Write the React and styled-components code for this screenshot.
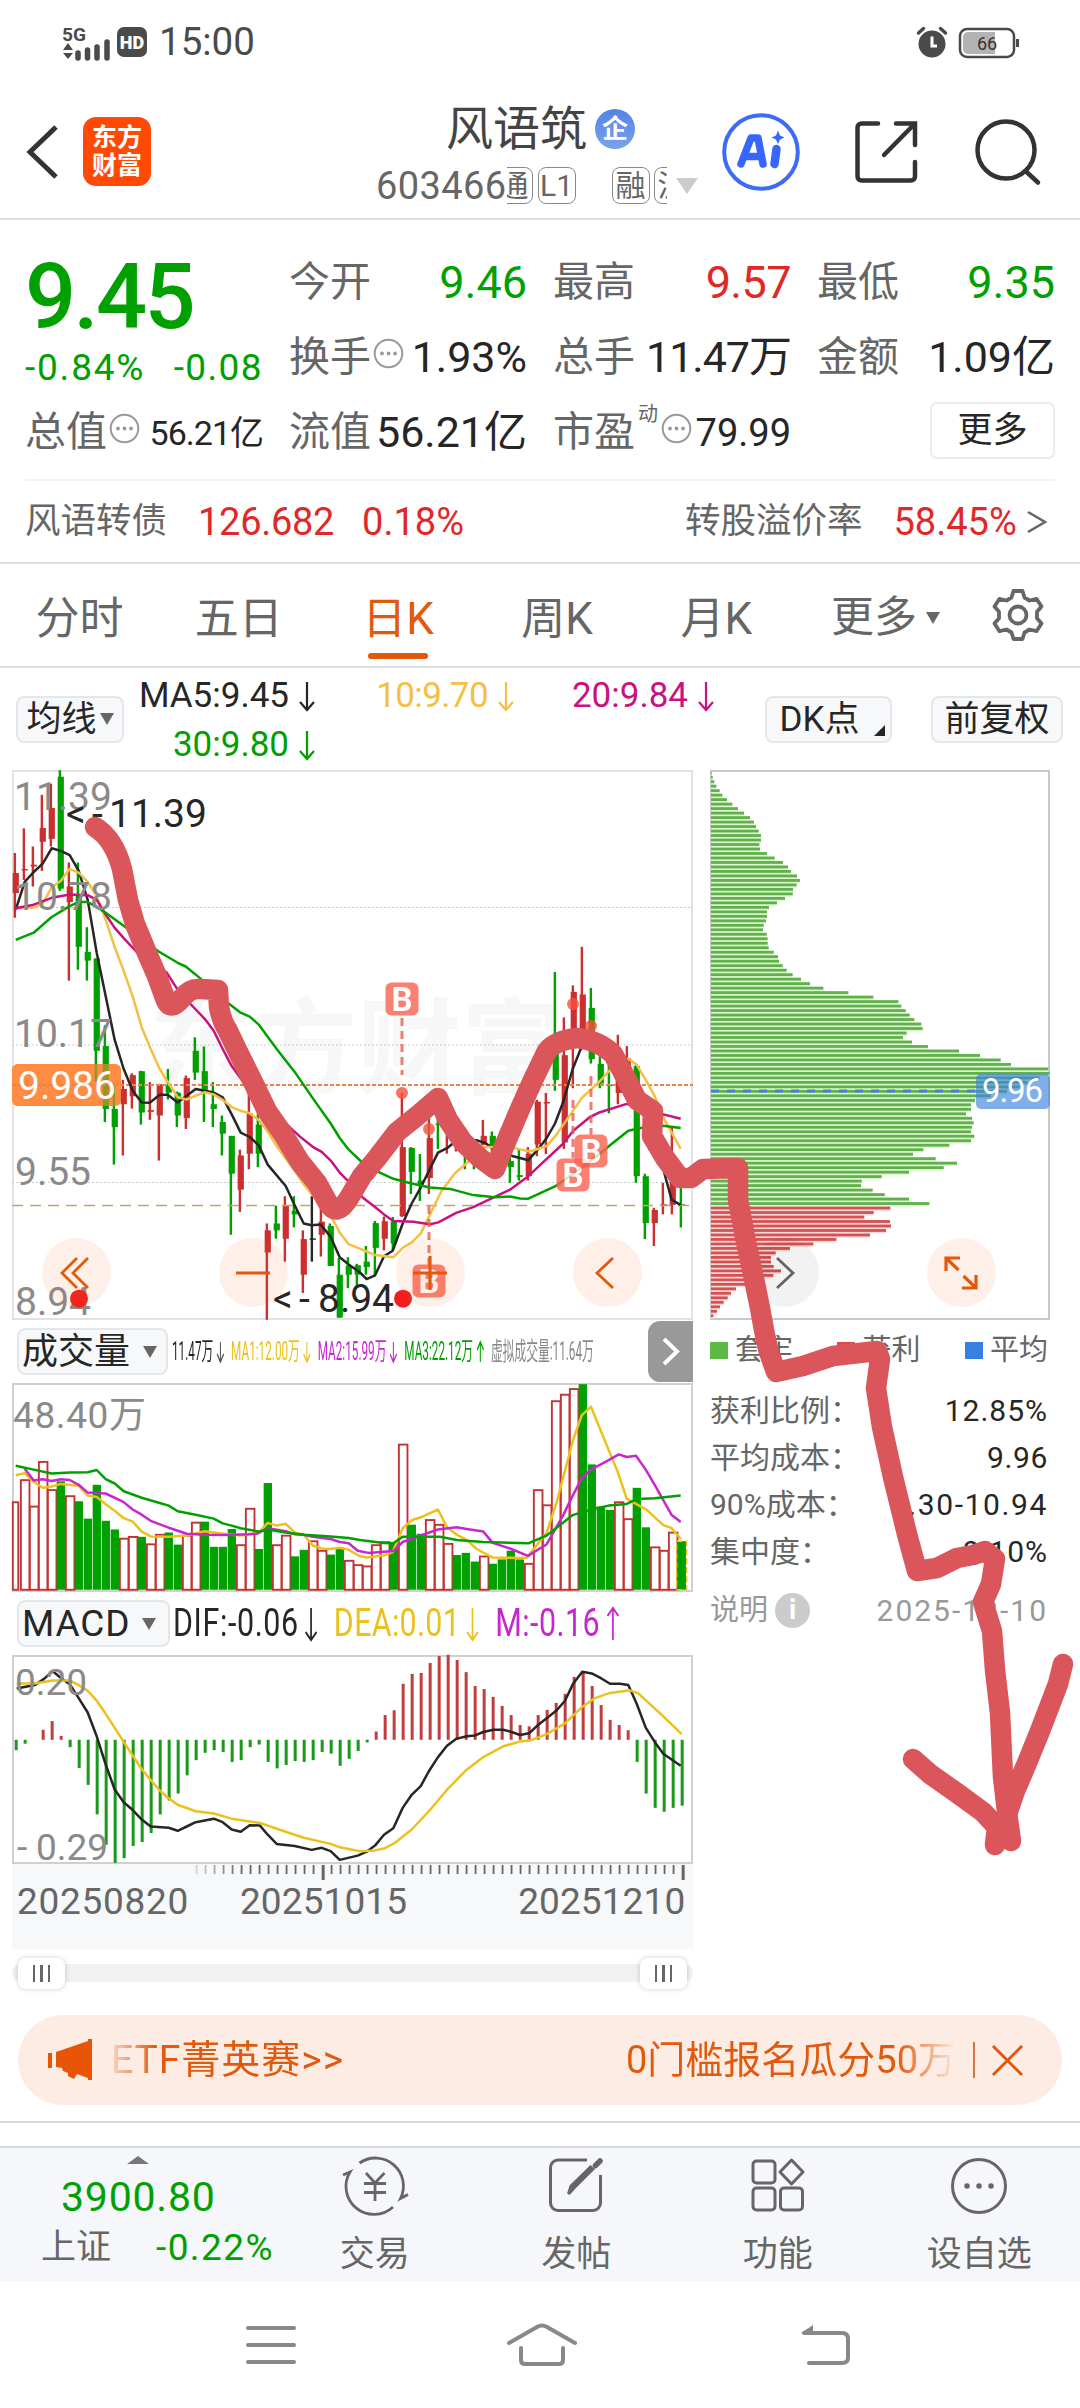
import styled, { createGlobalStyle } from "styled-components"

const GlobalStyle = createGlobalStyle`
  * {
    box-sizing: border-box;
  }

  body {
    margin: 0;
    background-color: #fff;
    font-family: Roboto, "Noto Sans CJK SC", sans-serif;
    line-height: 1;
  }

  svg {
    display: block;
    flex-shrink: 0;
    overflow: visible;
  }
`

const RED = "#cc2f2f"
const GREEN = "#00a000"
const ORANGE = "#e1590c"
const YELLOW = "#ecc11c"
const AMBER = "#f4bf45"
const MAGENTA = "#c8127f"
const PURPLE = "#c827d0"
const INK = "#262626"

const Screen = styled.div`
  position: relative;
  width: 1080px;
  height: 2408px;
  overflow: hidden;
  background-color: #fff;
`

const Row = styled.div`
  display: flex;
  align-items: center;
  white-space: nowrap;
`

const Text = styled.span`
  font-size: ${p => p.$size || 38}px;
  color: ${p => p.$color || "#666"};
  font-weight: ${p => p.$weight || 400};
  letter-spacing: ${p => p.$spacing || 0}px;
  margin-left: ${p => p.$left || 0}px;
  white-space: nowrap;
`

/* status bar */

const StatusBar = styled(Row)`
  height: 85px;
  padding: 0 60px 0 62px;
  justify-content: space-between;
`

const Clock = styled.span`
  margin-left: 12px;
  font-size: 38.5px;
  color: #4a4a4a;
`

/* header */

const Header = styled(Row)`
  height: 135px;
  padding-left: 27px;
  border-bottom: 2px solid #dcdcdc;
`

const Logo = styled.div`
  display: grid;
  align-content: center;
  justify-content: center;
  width: 68px;
  height: 69px;
  margin-left: 25px;
  border-radius: 13px;
  background-color: #ff4a05;
  color: #fff;
  font-size: 25px;
  font-weight: 700;
  line-height: 28px;
`

const TitleBlock = styled.div`
  width: 346px;
  margin-left: 225px;
  padding-top: 11px;
`

const TitleRow = styled(Row)`
  height: 57px;
  padding-left: 70px;
  gap: 8px;
`

const Badge = styled.span`
  display: flex;
  align-items: center;
  justify-content: center;
  width: 40px;
  height: 40px;
  border-radius: 50%;
  background: linear-gradient(#5382e6, #7aa3ec);
  color: #fff;
  font-size: 26px;
  font-weight: 700;
`

const CodeRow = styled(Row)`
  height: 57px;
`

const TagClip = styled(Row)`
  justify-content: ${p => p.$end ? "flex-end" : "flex-start"};
  width: ${p => p.$width}px;
  overflow: hidden;
`

const Tag = styled.span`
  display: flex;
  flex-shrink: 0;
  align-items: center;
  justify-content: center;
  width: 38px;
  height: 37px;
  margin-left: ${p => p.$left || 0}px;
  border: 1.5px solid #8a8a8a;
  border-radius: 8px;
  color: #666;
  font-size: 30px;
`

const Tool = styled.div`
  margin-left: ${p => p.$left || 0}px;
`

const Triangle = styled.i`
  width: 0;
  height: 0;
  margin-left: ${p => p.$left || 0}px;
  border: ${p => p.$half || 7.5}px solid transparent;
  border-bottom: 0;
  border-top: ${p => p.$height || 12}px solid ${p => p.$color || "#666"};
`

/* quote */

const Quote = styled.section`
  height: 344px;
  padding: 25px 25px 0;
  border-bottom: 2px solid #dcdcdc;
`

const QuoteGrid = styled.div`
  display: grid;
  grid-template-columns: repeat(4, 238px);
  grid-auto-rows: 75px;
  column-gap: 26px;
`

const PriceCell = styled.div`
  grid-row: span 2;
`

const Price = styled.div`
  height: 104px;
  line-height: 105px;
  font-size: 90px;
  font-weight: 500;
  letter-spacing: -2.6px;
  color: ${GREEN};
`

const Cell = styled(Row)`
  justify-content: space-between;
`

const Hint = styled.span`
  margin: 0 0 8px 2px;
`

const Sup = styled.sup`
  margin: 0 1px 38px 3px;
  font-size: 20px;
  line-height: 20px;
  color: #666;
`

const MoreButton = styled.button`
  justify-self: end;
  align-self: center;
  width: 125px;
  height: 57px;
  margin-top: -5px;
  padding: 0;
  border: 2px solid #ebebeb;
  border-radius: 7px;
  background-color: #fff;
  color: ${INK};
  font: 400 35px/1 Roboto, "Noto Sans CJK SC", sans-serif;
`

const BondRow = styled(Row)`
  height: 83px;
  margin-top: 9px;
  border-top: 2px solid #f3f3f3;
`

/* period tabs */

const Tabs = styled(Row)`
  height: 104px;
  padding-right: 36px;
  border-bottom: 2px solid #dcdcdc;
`

const Tab = styled.div`
  display: flex;
  flex-direction: column;
  align-items: center;
  width: 159.2px;
  height: 100%;
  padding-top: 33px;
  font-size: 44px;
  color: ${p => p.$active ? ORANGE : "#666"};

  &::after {
    content: "";
    width: 60px;
    height: 6px;
    margin-top: 12px;
    border-radius: 3px;
    background-color: ${p => p.$active ? ORANGE : "transparent"};
  }
`

const MoreTab = styled(Row)`
  flex: 1;
  padding: 5px 0 0 35px;
`

/* moving averages */

const AverageBar = styled(Row)`
  height: 102px;
  padding: 0 16px;
`

const Averages = styled.div`
  display: grid;
  grid-template-columns: 175px 199px 200px;
  grid-auto-rows: 49px;
  justify-items: end;
  align-items: center;
  margin-left: 16px;
  padding-top: 2px;
`

const Chip = styled.div`
  display: flex;
  align-items: center;
  justify-content: ${p => p.$start ? "flex-start" : "center"};
  position: relative;
  width: ${p => p.$width}px;
  height: 47px;
  margin-left: ${p => p.$left || 0}px;
  padding-left: ${p => p.$start || 0}px;
  padding-right: ${p => p.$end || 0}px;
  border: 2px solid #e3e7eb;
  border-radius: 8px;
  background-color: #f7f8fa;
  color: ${INK};
  font-size: ${p => p.$size || 35}px;
  white-space: nowrap;
`

const Corner = styled.i`
  position: absolute;
  right: 5px;
  bottom: 5px;
  border-left: 11px solid transparent;
  border-bottom: 11px solid ${INK};
`

/* charts */

const Charts = styled.section`
  display: grid;
  grid-template-columns: 681px 340px;
  column-gap: 17px;
  padding-left: 12px;
`

const ChartBox = styled.div`
  position: relative;
  height: ${p => p.$height}px;
  box-shadow: inset 0 0 0 2px ${p => p.$line || "#d0d0d0"};
`

const RoundButton = styled.button`
  position: absolute;
  left: ${p => p.$x - 34.5}px;
  top: 468px;
  display: flex;
  align-items: center;
  justify-content: center;
  width: 69px;
  height: 69px;
  padding: 0;
  border: none;
  border-radius: 50%;
  background-color: ${p => p.$gray ? "rgb(0 0 0 / .05)" : "rgb(246 105 30 / .1)"};
`

const ChartHeader = styled(Row)`
  position: relative;
  height: 63px;
  padding-left: 5px;
`

const Squeezed = styled(Row)`
  width: 0;
  margin-left: ${p => p.$left}px;
  transform: scaleX(${p => p.$scale});
  transform-origin: left;
  gap: ${p => p.$gap}px;
`

const NextButton = styled.button`
  position: absolute;
  right: 0;
  top: 1px;
  display: flex;
  align-items: center;
  justify-content: center;
  width: 45px;
  height: 61px;
  padding: 0;
  border: none;
  border-radius: 12px 0 0 12px;
  background-color: #999;
`

const Axis = styled.div`
  height: 85px;
  background-color: #f7f8fa;
`

const AxisDates = styled(Row)`
  padding: 3px 0 0 5px;
`

const Slider = styled(Row)`
  height: 48px;
`

const Track = styled(Row)`
  justify-content: space-between;
  width: 681px;
  height: 18px;
  padding: 0 6px;
  border-radius: 9px;
  background-color: #f1f1f3;
`

const Handle = styled.div`
  display: flex;
  align-items: center;
  justify-content: center;
  gap: 5px;
  width: 47px;
  height: 31px;
  border-radius: 8px;
  background-color: #fff;
  box-shadow: 0 0 5px rgb(0 0 0 / .2);

  i {
    width: 2.5px;
    height: 17px;
    background-color: #666;
  }
`

const Legend = styled(Row)`
  justify-content: space-between;
  height: 60px;
  padding-right: 2px;
`

const LegendItem = styled(Row)`
  gap: 7px;
  font-size: 29px;
  color: #666;

  &::before {
    content: "";
    width: 18px;
    height: 17px;
    background-color: ${p => p.$color};
  }
`

const Stats = styled.div`
  padding-top: 7px;
`

const Stat = styled(Row)`
  justify-content: space-between;
  height: ${p => p.$tall ? 71 : 47}px;
  padding-right: 2px;
  font-size: ${p => p.$tall ? 29 : 30}px;
  color: ${p => p.$tall ? "#999" : "#666"};
`

const StatValue = styled.span`
  font-size: 30px;
  color: ${p => p.$muted ? "#999" : INK};
  letter-spacing: ${p => p.$spacing || 1}px;
`

const Info = styled.span`
  display: inline-flex;
  align-items: center;
  justify-content: center;
  width: 35px;
  height: 35px;
  margin-left: 7px;
  border-radius: 50%;
  background-color: #ccc;
  color: #fff;
  font-size: 27px;
  font-weight: 700;
`

/* banner */

const Banner = styled(Row)`
  height: 90px;
  margin: 18px 18px 16px;
  padding: 0 38px 0 30px;
  border-radius: 45px;
  background-color: #fcece3;
`

const Marquee = styled(Row)`
  flex: 1;
  justify-content: space-between;
  margin: 0 17px;
  overflow: hidden;
  height: 60px;
  mask-image: linear-gradient(90deg, rgb(0 0 0 / .15), #000 45px, #000 calc(100% - 60px), transparent);
`

const Separator = styled.i`
  width: 2px;
  height: 36px;
  margin-right: 16px;
  background-color: #d9763c;
`

/* bottom bars */

const Gap = styled.div`
  height: 25px;
  border-top: 2px solid #d6dadd;
`

const ActionBar = styled.nav`
  display: grid;
  grid-template-columns: 274px repeat(4, 201.5px);
  height: 136px;
  border-top: 2px solid #d6dadd;
  background-color: #f6f7fa;
`

const IndexBlock = styled.div`
  padding-top: 8px;
`

const IndexRow = styled(Row)`
  height: ${p => p.$height}px;
`

const UpTriangle = styled.i`
  display: block;
  width: 0;
  margin-left: 127px;
  border: 11px solid transparent;
  border-top: 0;
  border-bottom: 8px solid #777;
`

const Action = styled.div`
  display: flex;
  flex-direction: column;
  align-items: center;
  padding-top: 8px;
  gap: 21px;
  color: #666;
  font-size: 35px;
`

const SystemNav = styled.nav`
  display: grid;
  grid-template-columns: 261px 292px 52px;
  align-items: center;
  height: 126px;
  padding-left: 246px;
`

const Sketch = styled.svg`
  position: absolute;
  left: 0;
  top: 0;
  pointer-events: none;
`

/* ---------- data ---------- */

const STEP = 27
const FIRST = 47

// [up, high, low, bodyTop, bodyBottom]
const candles = [
  [1, 256, 434, 311, 366], [1, 188, 330, 300, 304], [1, 238, 348, 288, 293], [1, 96, 305, 187, 225],
  [1, 65, 238, 132, 217], [0, 28, 360, 46, 354], [1, 282, 607, 348, 391], [0, 282, 577, 370, 514],
  [0, 460, 607, 528, 552], [0, 546, 885, 546, 800], [0, 730, 996, 787, 960], [0, 890, 1113, 960, 1010],
  [1, 880, 1088, 905, 947], [1, 862, 959, 867, 925], [0, 855, 1003, 856, 970], [1, 886, 990, 963, 968],
  [1, 892, 1102, 892, 978], [0, 850, 934, 895, 915], [0, 912, 1010, 915, 978], [1, 868, 1015, 875, 985],
  [0, 763, 880, 800, 860], [0, 788, 996, 856, 915], [0, 886, 1010, 947, 960], [0, 978, 1088, 996, 1028],
  [0, 1034, 1306, 1034, 1138], [1, 1072, 1243, 1088, 1182], [1, 895, 1126, 972, 1083], [0, 972, 1120, 1003, 1083],
  [1, 1275, 1540, 1294, 1355], [0, 1226, 1317, 1275, 1294], [1, 1200, 1380, 1226, 1317], [0, 1200, 1286, 1240, 1250],
  [1, 1294, 1466, 1318, 1416], [2, 1200, 1380, 1316, 1320], [1, 1230, 1366, 1270, 1306], [0, 1275, 1392, 1282, 1392],
  [0, 1370, 1534, 1416, 1534], [0, 1368, 1453, 1392, 1416], [0, 1386, 1450, 1390, 1416], [0, 1337, 1416, 1380, 1395],
  [0, 1268, 1416, 1274, 1342], [1, 1256, 1349, 1269, 1317], [0, 1257, 1350, 1270, 1330], [1, 916, 1257, 1065, 1255],
  [0, 1065, 1194, 1067, 1133], [0, 1084, 1213, 1157, 1168], [1, 985, 1194, 1040, 1150], [0, 975, 1070, 1000, 1004],
  [1, 1000, 1083, 1020, 1024], [1, 1000, 1077, 1020, 1024], [0, 1070, 1126, 1080, 1084], [0, 1080, 1126, 1090, 1094],
  [1, 990, 1060, 1034, 1058], [0, 1022, 1090, 1034, 1062], [1, 1080, 1120, 1090, 1110], [0, 1080, 1163, 1103, 1120],
  [0, 1070, 1157, 1142, 1147], [1, 1065, 1157, 1083, 1145], [1, 935, 1090, 940, 1058], [1, 916, 1084, 941, 945],
  [0, 583, 910, 790, 880], [1, 708, 1070, 812, 1052], [1, 620, 903, 638, 780], [1, 514, 745, 645, 745],
  [0, 627, 835, 682, 823], [0, 815, 903, 836, 890], [0, 840, 972, 893, 897], [1, 756, 947, 850, 916],
  [1, 787, 850, 820, 850], [0, 840, 1163, 842, 1145], [0, 1138, 1318, 1145, 1274], [1, 1232, 1337, 1238, 1274],
  [1, 1163, 1250, 1222, 1227], [1, 1010, 1250, 1140, 1224], [0, 1175, 1286, 1222, 1225],
]

const priceLines = [
  [INK, "47,412 74,335 101,308 128,285 155,243 182,250 209,262 236,305 263,385 290,530 317,650 344,770 371,850 398,910 425,942 449,943 479,921 503,921 533,942 587,905 641,915 668,928 695,975 722,1025 749,1037 776,1060 803,1113 857,1172 884,1225 911,1275 935,1280 962,1278 992,1312 1019,1368 1046,1388 1080,1410 1100,1428 1125,1418 1152,1365 1178,1350 1208,1275 1235,1220 1260,1180 1287,1130 1314,1080 1341,1068 1365,1050 1395,1045 1430,1046 1456,1054 1490,1075 1540,1090 1585,1101 1615,1070 1640,1040 1665,1000 1690,940 1718,850 1742,795 1770,770 1800,765 1850,800 1900,880 1950,1000 1985,1110 2015,1210 2042,1224"],
  [AMBER, "47,408 101,406 128,395 155,350 182,333 209,300 236,310 263,335 290,375 317,440 344,515 371,580 398,650 425,735 452,795 479,850 506,890 533,928 560,934 614,914 641,920 668,935 695,955 722,965 749,972 776,990 803,1022 830,1062 884,1130 911,1167 938,1198 962,1210 1005,1275 1019,1300 1046,1332 1100,1352 1125,1362 1180,1368 1208,1342 1235,1327 1262,1303 1290,1250 1325,1185 1365,1137 1405,1105 1450,1065 1530,1065 1590,1077 1640,1062 1670,1030 1715,970 1745,930 1800,883 1828,855 1860,830 1885,822 1910,838 1937,880 1964,925 1991,985 2018,1030 2042,1070"],
  [MAGENTA, "47,408 101,398 155,379 209,370 263,372 290,385 317,425 344,462 371,490 417,535 500,585 528,625 570,670 614,712 641,745 668,795 695,842 749,910 900,1036 938,1064 965,1078 992,1102 1019,1135 1046,1160 1090,1205 1125,1230 1152,1250 1180,1268 1240,1270 1290,1277 1315,1272 1370,1245 1420,1230 1500,1195 1530,1182 1585,1145 1640,1097 1690,1055 1720,1020 1770,982 1800,969 1880,946 1930,955 1990,975 2042,987"],
  [GREEN, "47,495 101,475 155,432 209,402 236,391 263,391 290,404 317,420 380,462 475,526 533,558 557,568 600,600 690,673 720,694 749,706 776,728 830,795 884,858 938,930 992,1000 1019,1040 1046,1072 1090,1110 1135,1133 1180,1152 1235,1165 1290,1176 1350,1180 1420,1197 1485,1203 1530,1201 1560,1206 1585,1207 1665,1173 1740,1125 1790,1090 1830,1060 1885,1020 1930,1011 1990,1006 2042,1012"],
]

// [up, top]
const volumes = [
  [1, 418], [1, 367], [1, 428], [1, 325], [1, 390], [0, 372], [1, 404], [0, 418], [0, 458], [0, 380],
  [0, 463], [0, 483], [1, 502], [1, 498], [0, 500], [1, 515], [1, 493], [0, 490], [0, 518], [1, 495],
  [1, 465], [0, 465], [0, 523], [0, 523], [0, 482], [1, 517], [1, 433], [0, 528], [0, 376], [1, 517],
  [1, 495], [0, 545], [0, 530], [1, 508], [1, 530], [0, 541], [0, 524], [1, 553], [1, 563], [1, 566],
  [1, 517], [1, 510], [0, 515], [1, 285], [0, 472], [0, 493], [1, 459], [1, 470], [1, 514], [0, 542],
  [0, 537], [0, 557], [1, 543], [0, 562], [0, 552], [0, 532], [0, 552], [1, 560], [1, 390], [1, 425],
  [1, 185], [1, 170], [1, 157], [0, 148], [0, 333], [0, 430], [0, 438], [1, 418], [1, 457], [0, 387],
  [0, 478], [1, 522], [1, 530], [1, 488], [0, 510],
]

const volumeLines = [
  [YELLOW, "47,358 74,353 101,373 128,387 155,384 182,378 236,382 263,405 290,408 317,425 344,440 371,457 398,465 425,488 452,499 506,500 560,497 614,487 668,493 722,497 776,490 803,468 830,474 857,470 884,490 911,495 938,520 965,527 992,528 1019,525 1046,530 1080,545 1100,548 1150,543 1178,535 1208,480 1235,462 1262,455 1314,437 1341,478 1370,495 1400,507 1430,528 1478,548 1580,549 1640,490 1670,420 1720,275 1745,220 1773,200 1826,300 1853,350 1880,412 1940,438 1990,473 2015,480 2042,505"],
  [PURPLE, "74,343 101,370 128,367 155,371 182,367 209,369 236,380 263,398 317,400 371,420 398,437 425,449 452,463 506,479 533,486 560,493 614,495 668,496 749,494 770,493 803,480 857,487 884,494 911,495 938,500 992,505 1019,512 1046,515 1073,532 1105,537 1180,533 1208,512 1262,497 1314,483 1370,478 1400,482 1450,488 1478,514 1530,527 1584,544 1640,517 1690,450 1718,405 1745,365 1773,345 1826,323 1856,310 1880,316 1908,313 1937,345 1964,380 2015,450 2042,466"],
  [GREEN, "47,336 101,345 155,354 209,352 263,351 290,346 317,367 344,377 371,395 425,410 479,422 506,428 533,441 587,449 641,458 668,469 695,474 722,480 776,488 803,483 857,490 911,495 992,499 1046,503 1080,507 1150,514 1180,515 1208,500 1262,500 1320,500 1370,507 1450,512 1585,515 1640,497 1690,467 1718,450 1773,437 1826,428 1880,424 1910,413 1964,411 2042,405"],
]

const MACD_ZERO = 968
const macdBars = [
  992, 977, 968, 945, 925, 959, 985, 1033, 1072, 1140, 1210, 1252, 1241, 1213, 1204, 1183, 1140, 1108, 1092,
  1050, 1015, 998, 992, 996, 1019, 1015, 985, 979, 1019, 1034, 1026, 1017, 1019, 1015, 996, 1000, 1028, 1012,
  994, 974, 949, 911, 900, 839, 816, 814, 791, 775, 772, 784, 812, 844, 851, 869, 890, 911, 934, 937, 911, 899,
  883, 862, 823, 810, 844, 888, 922, 934, 946, 1019, 1092, 1125, 1134, 1125, 1120,
]

const macdLines = [
  [INK, "50,850 104,842 131,828 158,810 182,825 209,840 236,872 263,905 290,960 317,1025 344,1083 371,1112 398,1130 425,1152 452,1168 506,1171 533,1178 560,1168 587,1158 641,1150 668,1158 695,1175 722,1180 749,1165 780,1166 803,1187 830,1208 884,1213 935,1222 965,1217 992,1225 1019,1245 1073,1235 1100,1226 1125,1212 1152,1187 1180,1172 1208,1125 1235,1095 1262,1075 1287,1040 1314,1008 1341,982 1368,966 1400,960 1425,958 1450,950 1480,945 1510,945 1535,950 1560,957 1587,953 1614,934 1641,918 1670,900 1695,878 1720,838 1747,811 1775,815 1803,826 1830,839 1860,839 1885,842 1910,885 1937,940 1964,973 1990,1000 2018,1015 2042,1028"],
  [YELLOW, "50,838 104,838 158,831 209,831 236,842 263,855 290,878 317,908 371,973 425,1036 479,1085 506,1103 533,1118 587,1133 641,1138 700,1151 780,1160 857,1180 911,1194 992,1208 1019,1216 1080,1225 1125,1223 1155,1218 1184,1206 1235,1175 1290,1130 1345,1080 1400,1037 1450,1008 1510,983 1560,972 1590,970 1640,955 1695,930 1747,892 1785,872 1830,860 1890,854 1915,861 1990,914 2045,955"],
]

const trapped = [
  2, 5, 10, 16, 26, 34, 48, 64, 81, 99, 117, 129, 135, 143, 150, 150, 145, 147, 168, 191, 216, 231, 240, 258,
  267, 257, 246, 245, 222, 198, 174, 168, 168, 165, 158, 156, 167, 170, 170, 173, 188, 201, 204, 215, 227, 245,
  270, 297, 337, 412, 487, 562, 571, 584, 596, 610, 631, 635, 587, 576, 603, 651, 744, 807, 869, 900, 1012,
  1016, 985, 950, 930, 888, 840, 792, 780, 780, 765, 783, 788, 783, 780, 790, 780, 715, 637, 606, 674, 738,
  698, 594, 512, 452, 450, 485, 521, 594, 655,
]
const profitable = [
  538, 488, 460, 537, 540, 525, 477, 376, 307, 237, 194, 180, 180, 188, 210, 187, 120, 103, 75, 60, 50, 38,
  27, 18, 7,
]

const barX = i => (FIRST + i * STEP) / 3 - 12
const priceY = v => v / 2.751 - 10
const panelY = v => v / 2.306 - 63
const macdY = v => v / 2.306 - 335

const scaleLine = (points, toY) =>
  points.split(" ").map(pair => {
    const [x, y] = pair.split(",").map(Number)
    return `${(x / 3 - 12).toFixed(1)},${toY(y).toFixed(1)}`
  }).join(" ")

function Lines({ items, toY }) {
  return items.map(([color, points]) => (
    <polyline key={color} points={scaleLine(points, toY)} fill="none" stroke={color} strokeWidth="2.5" strokeLinejoin="round" />
  ))
}

/* ---------- icons ---------- */

function Dots() {
  return (
    <Hint>
      <svg width="31" height="31" viewBox="0 0 31 31">
        <circle cx="15.5" cy="15.5" r="13.8" fill="none" stroke="#999" strokeWidth="2" />
        <circle cx="9" cy="15.5" r="1.9" fill="#999" />
        <circle cx="15.5" cy="15.5" r="1.9" fill="#999" />
        <circle cx="22" cy="15.5" r="1.9" fill="#999" />
      </svg>
    </Hint>
  )
}

function Arrow({ up, color, height = 30, width = 16, margin = 10 }) {
  return (
    <svg width={width + margin} height={height} viewBox={`${-margin} 0 ${width + margin} ${height}`}>
      <path
        d={`M${width / 2} 1V${height - 1}M1 ${height - width / 2 - 1}L${width / 2} ${height - 1}L${width - 1} ${height - width / 2 - 1}`}
        transform={up ? `rotate(180 ${width / 2} ${height / 2})` : undefined}
        fill="none"
        stroke={color}
        strokeWidth="2.2"
      />
    </svg>
  )
}

function SignalIcon() {
  return (
    <svg width="85" height="36" viewBox="0 0 85 36">
      <text x="0" y="15.5" fontSize="19" fontWeight="700" fill="#4a4a4a" textLength="24" lengthAdjust="spacingAndGlyphs">5G</text>
      <path d="M6 18l5 7H1zM6 34l5-6H1z" fill="#4a4a4a" />
      <path d="M16 33v-5M25.500 33v-8M35 33V22M45 33V17" stroke="#4a4a4a" strokeWidth="5.500" strokeLinecap="round" />
      <rect x="55" y="2" width="30" height="30" rx="7" fill="#4a4a4a" />
      <text x="70" y="23.500" fontSize="18" fontWeight="900" textAnchor="middle" fill="#fff">HD</text>
    </svg>
  )
}

function BatteryIcon() {
  return (
    <svg width="103" height="34" viewBox="0 0 103 34">
      <circle cx="15" cy="18" r="13.5" fill="#4a4a4a" />
      <path d="M1.5 7L6.5 2.5M28.5 7L23.5 2.5" stroke="#4a4a4a" strokeWidth="3.5" strokeLinecap="round" />
      <path d="M15 10.5V20H20" fill="none" stroke="#fff" strokeWidth="3" />
      <rect x="43" y="3" width="54" height="28" rx="7" fill="#fff" stroke="#4a4a4a" strokeWidth="2.5" />
      <path d="M51 6H78V28H51a5 5 0 0 1-5-5V11a5 5 0 0 1 5-5z" fill="#b3b3b3" />
      <path d="M100.5 13v8" stroke="#4a4a4a" strokeWidth="3" />
      <text x="70" y="23.5" fontSize="18" textAnchor="middle" fill="#333">66</text>
    </svg>
  )
}

function AiIcon() {
  return (
    <svg width="78" height="78" viewBox="0 0 78 78">
      <circle cx="39" cy="39" r="36.8" fill="none" stroke="#3d6bf5" strokeWidth="4" />
      <path d="M19 51L29 25H36L41 51M23.5 43.5H38" fill="none" stroke="#3766ff" strokeWidth="7.5" strokeLinejoin="round" strokeLinecap="round" />
      <path d="M54.5 36L52.5 51" stroke="#3766ff" strokeWidth="8.5" strokeLinecap="round" />
      <path d="M56 17.5L58 22.5L62.5 24.5L58 26.5L56 31L54 26.5L49.5 24.5L54 22.5Z" fill="#3766ff" />
    </svg>
  )
}

function ShareIcon() {
  return (
    <svg width="64" height="64" viewBox="0 0 64 64" fill="none" stroke="#333" strokeWidth="4.5" strokeLinecap="round">
      <path d="M24 3.5H7.5a4 4 0 0 0-4 4v49a4 4 0 0 0 4 4H57a4 4 0 0 0 4-4V42" />
      <path d="M42 3.5H61V25M60 4.5L30 35" />
    </svg>
  )
}

function SearchIcon() {
  return (
    <svg width="66" height="66" viewBox="0 0 66 66" fill="none" stroke="#333" strokeWidth="4.5">
      <circle cx="31" cy="31" r="28.5" />
      <path d="M50.5 52L63 63.5" strokeLinecap="round" />
    </svg>
  )
}

function GearIcon() {
  return (
    <svg width="52" height="52" viewBox="0 0 52 52" fill="none" stroke="#666" strokeWidth="3.8" strokeLinejoin="round">
      <path d="M21.5 2H30.5L32.5 8.5L37.5 11.5L44.5 9.8L49.5 17.5L45 22.8V29.2L49.5 34.5L44.5 42.2L37.5 40.5L32.5 43.5L30.5 50H21.5L19.5 43.5L14.5 40.5L7.5 42.2L2.5 34.5L7 29.2V22.8L2.5 17.5L7.5 9.8L14.5 11.5L19.5 8.5Z" />
      <circle cx="26" cy="26" r="8.5" />
    </svg>
  )
}

function HornIcon() {
  return (
    <svg width="46" height="42" viewBox="0 0 46 42" fill="#e95506">
      <path d="M0 14h4v15H0zM8 13L40 2V0h4v41h-4v-2L29 35l-3 5-6-3 0-3-5-2-1-3-6-1z" />
    </svg>
  )
}

const actionIcons = {
  交易: (
    <svg width="66" height="60" viewBox="0 0 66 60" fill="none" stroke="#666" strokeWidth="2.8">
      <path d="M17.5 7A28 28 0 0 1 58.5 42.5L66 38.5" />
      <path d="M51 51A28 28 0 0 1 8 16L1 19" />
      <path d="M24 17L33 27L42.5 17M22 27.5H44M22 36.5H44M33 27V45" />
    </svg>
  ),
  发帖: (
    <svg width="58" height="60" viewBox="0 0 58 60" fill="none" stroke="#666" strokeWidth="3">
      <path d="M40 4H11a7.5 7.5 0 0 0-7.5 7.5V47a7.5 7.5 0 0 0 7.5 7.5H46a7.5 7.5 0 0 0 7.5-7.5V19" />
      <path d="M46 13L27 32L21.5 38L24 30L43.5 11Z" fill="#666" />
      <path d="M48.5 9.5L53 5" strokeWidth="5.5" strokeLinecap="round" />
    </svg>
  ),
  功能: (
    <svg width="54" height="60" viewBox="0 0 54 60" fill="none" stroke="#666" strokeWidth="3">
      <rect x="2" y="5" width="22" height="22" rx="3.5" />
      <rect x="2" y="32" width="22" height="22" rx="3.5" />
      <rect x="29.5" y="32" width="22" height="22" rx="3.5" />
      <path d="M40.5 4L52 16L40.5 28L29 16Z" strokeLinejoin="round" />
    </svg>
  ),
  设自选: (
    <svg width="58" height="60" viewBox="0 0 58 60" fill="none" stroke="#666" strokeWidth="3">
      <circle cx="29" cy="30" r="26.5" />
      <path d="M17 30h.01M29 30h.01M41 30h.01" strokeWidth="5.5" strokeLinecap="round" />
    </svg>
  ),
}

/* ---------- charts ---------- */

const signals = [
  { x: 390, y: 229, dotY: 323, from: 248, to: 305 },
  { x: 417, y: 511, dotY: 359, from: 436, to: 495 },
  { x: 561, y: 405, dotY: 234, from: 330, to: 388 },
  { x: 579, y: 381, dotY: 256, from: 306, to: 365 },
]

function PriceChart() {
  return (
    <svg width="681" height="550" viewBox="0 0 681 550">
      <text x="137" y="316" fontSize="104" fontWeight="700" fill="#f7f7f7">东方财富</text>
      <path d="M0 137.5H681M0 275H681M0 412.5H681" stroke="#ccc" strokeDasharray="2 2" />
      <rect x="0" y="294" width="109" height="42" rx="6" fill="#ff8c42" />
      {candles.map(([up, high, low, top, bottom], i) => {
        const color = up === 2 ? INK : up ? RED : GREEN
        return (
          <g key={i} fill={color}>
            <rect x={barX(i) - 2} y={priceY(high)} width="2.4" height={priceY(low) - priceY(high)} />
            <rect x={barX(i) - 3} y={priceY(top)} width="6.2" height={priceY(bottom) - priceY(top)} />
          </g>
        )
      })}
      <rect x="0" y="294" width="109" height="42" rx="6" fill="#ff8c42" opacity=".6" />
      <path d="M0 315H681" stroke="#e8834a" strokeWidth="2" strokeDasharray="4 2" />
      <path d="M0 435.5H681" stroke="#c2a468" strokeWidth="1.5" strokeDasharray="11 7" />
      <Lines items={priceLines} toY={priceY} />
      <g fontSize="39" fill="#8a8a8a">
        <text x="2" y="40">11.39</text>
        <text x="2" y="140">10.78</text>
        <text x="2" y="277">10.17</text>
        <text x="3" y="415">9.55</text>
        <text x="3" y="545">8.94</text>
      </g>
      <text x="6" y="329" fontSize="39" fill="#fff">9.986</text>
      <g fontSize="39" fill={INK}>
        <text x="54 80 97" y="57">&lt;-11.39</text>
        <text x="261 287 306" y="542">&lt;-8.94</text>
      </g>
      {signals.map(s => (
        <g key={s.x} opacity=".8">
          <path d={`M${s.x} ${s.from}V${s.to}`} stroke="#e4604f" strokeWidth="3" strokeDasharray="8 5" />
          <circle cx={s.x} cy={s.dotY} r="6" fill="#f9503c" />
          <rect x={s.x - 16.5} y={s.y - 16.5} width="33" height="33" rx="6" fill="#fa6250" />
          <text x={s.x} y={s.y + 12} fontSize="33" fontWeight="700" textAnchor="middle" fill="#fff">B</text>
        </g>
      ))}
      <circle cx="67" cy="528.7" r="9" fill="#f01e1e" />
      <circle cx="391" cy="528.7" r="9" fill="#f01e1e" />
    </svg>
  )
}

function VolumeChart() {
  const base = panelY(622)
  return (
    <svg width="681" height="209" viewBox="0 0 681 209">
      {volumes.map(([up, top], i) => up ? (
        <rect key={i} x={Math.max(barX(i) - 3.8, 0.8)} y={panelY(top) + 1} width={i ? 8.6 : 5.5} height={base - panelY(top) - 1} fill="#fff" stroke="#c23434" strokeWidth="1.9" />
      ) : (
        <rect key={i} x={barX(i) - 4} y={panelY(top)} width="8.3" height={base - panelY(top)} fill={GREEN} />
      ))}
      <rect x={barX(74) - 5} y={panelY(510)} width="10" height={base - panelY(510)} fill="none" stroke={YELLOW} strokeWidth="1.5" strokeDasharray="6 3" />
      <Lines items={volumeLines} toY={panelY} />
      <text x="1" y="44.5" fontSize="37" fill="#8a8a8a" textLength="133">48.40万</text>
    </svg>
  )
}

function MacdChart() {
  return (
    <svg width="681" height="209" viewBox="0 0 681 209">
      {macdBars.map((v, i) => (
        <rect
          key={i}
          x={barX(i) - 1}
          y={macdY(Math.min(v, MACD_ZERO))}
          width="3"
          height={Math.abs(macdY(v) - macdY(MACD_ZERO))}
          fill={v > MACD_ZERO ? "#1a9a1a" : "#c23e3e"}
        />
      ))}
      <Lines items={macdLines} toY={macdY} />
      <g fontSize="37" fill="#8a8a8a">
        <text x="3" y="40">0.20</text>
        <text x="5 24" y="205">-0.29</text>
      </g>
    </svg>
  )
}

function TimeTicks() {
  return (
    <svg width="681" height="16" viewBox="0 0 681 16">
      {Array.from({ length: 55 }, (_, n) => n + 20).map(i => {
        const major = i === 34 || i === 74
        return (
          <rect key={i} x={barX(i)} y="1" width={major ? 3 : 1.8} height={major ? 15 : 9} fill="#666" opacity={Math.min(1, 0.25 + (i - 20) * 0.15)} />
        )
      })}
    </svg>
  )
}

function ChipChart() {
  const bars = [...trapped, ...profitable]
  return (
    <svg width="340" height="550" viewBox="0 0 340 550">
      {bars.map((w, i) => {
        const green = i < trapped.length
        const y = 1.2 + i * 4.488
        return (
          <g key={i}>
            <rect x="1" y={y} width={w / 3} height="4.488" fill={green ? "#d9f8cd" : "#fbd9d9"} />
            <rect x="1" y={y + 0.1} width={w / 3} height="2.8" fill={green ? "#62b04d" : "#d45252"} />
          </g>
        )
      })}
      <path d="M1 321H266" stroke="#4585d5" strokeWidth="3" strokeDasharray="8 8" />
      <rect x="266" y="304" width="74" height="35" rx="5" fill="#3a82e0" opacity=".65" />
      <text x="272" y="332" fontSize="33" fill="#fff" textLength="61">9.96</text>
    </svg>
  )
}

function LeftCharts() {
  return (
    <div>
      <ChartBox $height={550} $line="#e2e2e2">
        <PriceChart />
        <RoundButton $x={64}>
          <svg width="30" height="34" fill="none" stroke={ORANGE} strokeWidth="2.8"><path d="M16 2L1 17L16 32M27 2L12 17L27 32" /></svg>
        </RoundButton>
        <RoundButton $x={241}>
          <svg width="34" height="34" stroke={ORANGE} strokeWidth="3.2"><path d="M0 17H34" /></svg>
        </RoundButton>
        <RoundButton $x={418}>
          <svg width="34" height="34" stroke={ORANGE} strokeWidth="3.2"><path d="M0 17H34M17 0V34" /></svg>
        </RoundButton>
        <RoundButton $x={595}>
          <svg width="24" height="34" fill="none" stroke={ORANGE} strokeWidth="2.8"><path d="M18 2L2 17L18 32" /></svg>
        </RoundButton>
      </ChartBox>

      <ChartHeader>
        <Chip $width={151} $size={36} $start={3}>成交量<Triangle $left={13} /></Chip>
        <Squeezed $left={4} $scale={0.47} $gap={15}>
          <Row><Text $size={25} $color={INK}>11.47万</Text><Arrow color="#555" height={22} margin={7} /></Row>
          <Row><Text $size={25} $color={YELLOW}>MA1:12.00万</Text><Arrow color={YELLOW} height={22} margin={7} /></Row>
          <Row><Text $size={25} $color={PURPLE}>MA2:15.99万</Text><Arrow color={PURPLE} height={22} margin={7} /></Row>
          <Row><Text $size={25} $color={GREEN}>MA3:22.12万</Text><Arrow up color={GREEN} height={22} margin={7} /></Row>
          <Text $size={25} $color="#888">虚拟成交量:11.64万</Text>
        </Squeezed>
        <NextButton>
          <svg width="18" height="30" fill="none" stroke="#fff" strokeWidth="4"><path d="M2 2L15 14.5L2 27" /></svg>
        </NextButton>
      </ChartHeader>
      <ChartBox $height={209}>
        <VolumeChart />
      </ChartBox>

      <ChartHeader>
        <Chip $width={153} $size={37} $start={3}><Text $size={37} $color={INK} $spacing={0.9}>MACD</Text><Triangle $left={11} /></Chip>
        <Squeezed $left={3} $scale={0.78} $gap={21}>
          <Row><Text $size={39} $color={INK} $spacing={0.8}>DIF:-0.06</Text><Arrow color={INK} height={34} margin={8} /></Row>
          <Row><Text $size={39} $color={YELLOW} $spacing={0.4}>DEA:0.01</Text><Arrow color={YELLOW} height={34} margin={8} /></Row>
          <Row><Text $size={39} $color={PURPLE} $spacing={0.6}>M:-0.16</Text><Arrow up color={PURPLE} height={34} margin={8} /></Row>
        </Squeezed>
      </ChartHeader>
      <ChartBox $height={209}>
        <MacdChart />
      </ChartBox>

      <Axis>
        <TimeTicks />
        <AxisDates>
          <Text $size={37} $spacing={0.7}>20250820</Text>
          <Text $size={37} $left={51} $spacing={0.1}>20251015</Text>
          <Text $size={37} $left={111} $spacing={0.1}>20251210</Text>
        </AxisDates>
      </Axis>
      <Slider>
        <Track>
          <Handle><i /><i /><i /></Handle>
          <Handle><i /><i /><i /></Handle>
        </Track>
      </Slider>
    </div>
  )
}

function ChipPanel() {
  return (
    <div>
      <ChartBox $height={550} $line="#c8c8c8">
        <ChipChart />
        <RoundButton $gray $x={74}>
          <svg width="24" height="34" fill="none" stroke="#666" strokeWidth="2.8"><path d="M5 2L21 17L5 32" /></svg>
        </RoundButton>
        <RoundButton $x={251}>
          <svg width="34" height="34" fill="none" stroke={ORANGE} strokeWidth="3.2">
            <path d="M2 15V2H16M2 2L14.5 14M32 19V32H18M32 32L19.5 20" />
          </svg>
        </RoundButton>
      </ChartBox>
      <Legend>
        <LegendItem $color="#5cb944">套牢</LegendItem>
        <LegendItem $color="#dd4a4a">获利</LegendItem>
        <LegendItem $color="#3580e0">平均</LegendItem>
      </Legend>
      <Stats>
        <Stat>获利比例：<StatValue>12.85%</StatValue></Stat>
        <Stat>平均成本：<StatValue $spacing={0.6}>9.96</StatValue></Stat>
        <Stat>90%成本：<StatValue $spacing={1.6}>8.30-10.94</StatValue></Stat>
        <Stat>集中度：<StatValue>8.10%</StatValue></Stat>
        <Stat $tall><Row>说明<Info>i</Info></Row><StatValue $muted $spacing={2}>2025-12-10</StatValue></Stat>
      </Stats>
    </div>
  )
}

function HandSketch() {
  return (
    <Sketch width="1080" height="2408" fill="none" stroke="#db565b" strokeWidth="20.5" strokeLinecap="round" strokeLinejoin="round">
      <path d="M95 827C108 835 117 850 122 869L128 900L135 924L147 953L157 976L165 998Q170 1013 182 998Q190 988 200 989L218 990L219 1007Q222 1022 227 1029L240 1056L253 1082L267 1111L283 1134L300 1162L317 1183L328 1203Q337 1218 349 1198L362 1176L377 1158L397 1132L417 1116L438 1098L448 1120L463 1142L480 1158L495 1169L503 1149L520 1109L533 1080L547 1051Q556 1040 577 1038Q598 1040 613 1054L627 1080L637 1100L653 1111L652 1136L665 1158L680 1178H691L703 1169L738 1168V1200L745 1237L753 1274L760 1308L764 1330L768 1349L776 1372L803 1366L833 1356L877 1351L880 1359L876 1388L882 1427L893 1477L907 1534L917 1571L937 1568L957 1558L973 1555L985 1551L995 1559L991 1584L983 1602L992 1631L995 1670L1000 1713L1003 1777L1008 1820L1011 1841" />
      <path d="M913 1759L930 1774L957 1793L983 1812L997 1827L995 1845" />
      <path d="M1063 1664L1058 1684L1040 1731L1027 1763L1015 1791L1005 1820" />
    </Sketch>
  )
}

export default function App() {
  return (
    <Screen>
      <GlobalStyle />
      <StatusBar>
        <Row><SignalIcon /><Clock>15:00</Clock></Row>
        <BatteryIcon />
      </StatusBar>

      <Header>
        <svg width="31" height="54" fill="none" stroke="#333" strokeWidth="5"><path d="M29 2L3 27L29 52" /></svg>
        <Logo><span>东方</span><span>财富</span></Logo>
        <TitleBlock>
          <TitleRow><Text $size={47} $color="#444">风语筑</Text><Badge>企</Badge></TitleRow>
          <CodeRow>
            <Text $spacing={0.4}>603466</Text>
            <TagClip $end $width={26}><Tag>通</Tag></TagClip>
            <Tag $left={5}>L1</Tag>
            <Tag $left={36}>融</Tag>
            <TagClip $width={17}><Tag $left={4}>沪</Tag></TagClip>
            <Triangle $left={9} $color="#ccc" $half={11} $height={16} />
          </CodeRow>
        </TitleBlock>
        <AiIcon />
        <Tool $left={54}><ShareIcon /></Tool>
        <Tool $left={57}><SearchIcon /></Tool>
      </Header>

      <Quote>
        <QuoteGrid>
          <PriceCell>
            <Price>9.45</Price>
            <Cell>
              <Text $size={37} $color={GREEN} $spacing={1.8}>-0.84%</Text>
              <Text $size={37} $color={GREEN} $spacing={1.4}>-0.08</Text>
            </Cell>
          </PriceCell>
          <Cell><Text $size={41}>今开</Text><Text $size={45} $color={GREEN}>9.46</Text></Cell>
          <Cell><Text $size={41}>最高</Text><Text $size={45} $color="#e02828" $spacing={-0.6}>9.57</Text></Cell>
          <Cell><Text $size={41}>最低</Text><Text $size={45} $color={GREEN}>9.35</Text></Cell>
          <Cell><Row><Text $size={41}>换手</Text><Dots /></Row><Text $size={43} $color={INK}>1.93%</Text></Cell>
          <Cell><Text $size={41}>总手</Text><Text $size={43} $color={INK} $spacing={-1}>11.47万</Text></Cell>
          <Cell><Text $size={41}>金额</Text><Text $size={43} $color={INK}>1.09亿</Text></Cell>
          <Cell><Row><Text $size={41}>总值</Text><Dots /></Row><Text $size={34} $color={INK} $spacing={-1}>56.21亿</Text></Cell>
          <Cell><Text $size={41}>流值</Text><Text $size={43} $color={INK}>56.21亿</Text></Cell>
          <Cell><Row><Text $size={41}>市盈</Text><Sup>动</Sup><Dots /></Row><Text $size={38} $color={INK}>79.99</Text></Cell>
          <MoreButton>更多</MoreButton>
        </QuoteGrid>
        <BondRow>
          <Text $size={35.5}>风语转债</Text>
          <Text $left={31} $color="#e02828" $spacing={-0.3}>126.682</Text>
          <Text $left={28} $color="#e02828">0.18%</Text>
          <Text $left={221} $size={35.5}>转股溢价率</Text>
          <Text $left={31} $color="#e02828">58.45%</Text>
          <svg width="31" height="26" fill="none" stroke="#666" strokeWidth="2.6"><path d="M11 3L28 13L11 23" /></svg>
        </BondRow>
      </Quote>

      <Tabs>
        <Tab>分时</Tab>
        <Tab>五日</Tab>
        <Tab $active>日K</Tab>
        <Tab>周K</Tab>
        <Tab>月K</Tab>
        <MoreTab><Text $size={43}>更多</Text><Triangle $left={9} /></MoreTab>
        <GearIcon />
      </Tabs>

      <AverageBar>
        <Chip $width={108}>均线<Triangle $left={3} /></Chip>
        <Averages>
          <Row><Text $size={35} $color={INK}>MA5:9.45</Text><Arrow color={INK} /></Row>
          <Row><Text $size={35} $color={AMBER} $spacing={-0.6}>10:9.70</Text><Arrow color={AMBER} /></Row>
          <Row><Text $size={35} $color={MAGENTA}>20:9.84</Text><Arrow color={MAGENTA} /></Row>
          <Row><Text $size={35} $color={GREEN}>30:9.80</Text><Arrow color={GREEN} /></Row>
        </Averages>
        <Chip $width={127} $left={51} $end={18}>DK点<Corner /></Chip>
        <Chip $width={132} $left={39}>前复权</Chip>
      </AverageBar>

      <Charts>
        <LeftCharts />
        <ChipPanel />
      </Charts>

      <Banner>
        <HornIcon />
        <Marquee>
          <Text $size={39} $color={ORANGE} $spacing={1}>ETF菁英赛&gt;&gt;</Text>
          <Text $size={38} $color={ORANGE}>0门槛报名瓜分50万</Text>
        </Marquee>
        <Separator />
        <svg width="33" height="33" stroke={ORANGE} strokeWidth="3"><path d="M2 2L31 31M31 2L2 31" /></svg>
      </Banner>
      <Gap />
      <ActionBar>
        <IndexBlock>
          <UpTriangle />
          <IndexRow $height={66}><Text $left={61} $size={41} $color={GREEN} $spacing={0.8}>3900.80</Text></IndexRow>
          <IndexRow $height={34}><Text $left={41} $size={35}>上证</Text><Text $left={45} $size={37} $color={GREEN} $spacing={1.4}>-0.22%</Text></IndexRow>
        </IndexBlock>
        {Object.entries(actionIcons).map(([label, icon]) => (
          <Action key={label}>{icon}<span>{label}</span></Action>
        ))}
      </ActionBar>

      <SystemNav>
        <svg width="50" height="40" stroke="#888" strokeWidth="4" strokeLinecap="round"><path d="M2 3H48M2 20H48M2 37H48" /></svg>
        <svg width="70" height="44" fill="none" stroke="#888" strokeWidth="4" strokeLinecap="round" strokeLinejoin="round">
          <path d="M2 20L30 4Q35 1 40 4L68 20M14 25V37Q14 41 18 41H52Q56 41 56 37V25" />
        </svg>
        <svg width="52" height="42" fill="none" stroke="#888" strokeWidth="4" strokeLinecap="round">
          <path d="M5 9H43Q49 9 49 15V34Q49 39 43 39H10" />
          <path d="M14 1V9H2Z" fill="#888" stroke="none" />
        </svg>
      </SystemNav>
      <HandSketch />
    </Screen>
  )
}
